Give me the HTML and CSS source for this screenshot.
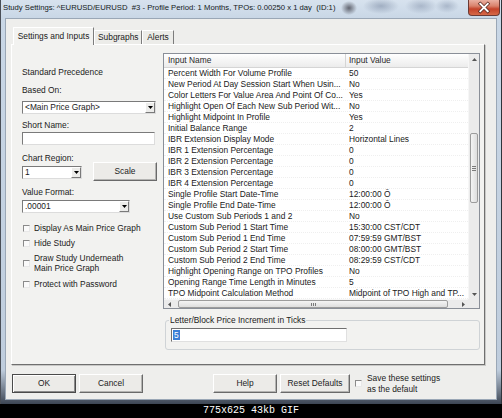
FILE: index.html
```html
<!DOCTYPE html>
<html>
<head>
<meta charset="utf-8">
<title>Study Settings</title>
<link rel="stylesheet" href="styles.css">
</head>
<body>
<div class="window">
  <div class="titlebar">
    <span class="title">Study Settings: ^EURUSD/EURUSD&nbsp; #3 - Profile Period: 1 Months, TPOs: 0.00250 x 1 day&nbsp; (ID:1)</span>
    <div class="close">
      <svg width="32" height="16" viewBox="0 0 32 16">
        <path d="M12 3.5 L20 11.5 M20 3.5 L12 11.5" stroke="#5a2a22" stroke-width="3.6" stroke-linecap="square"/>
        <path d="M12 3.5 L20 11.5 M20 3.5 L12 11.5" stroke="#ffffff" stroke-width="2" stroke-linecap="square"/>
      </svg>
    </div>
  </div>
  <div class="client">
    <div class="tabs">
      <div class="tab active">Settings and Inputs</div>
      <div class="tab">Subgraphs</div>
      <div class="tab">Alerts</div>
    </div>
    <div class="panel">
      <div class="leftcol">
        <div class="lbl first">Standard Precedence</div>
        <div class="lbl gap8">Based On:</div>
        <div class="select wide gap6"><span class="stext">&lt;Main Price Graph&gt;</span><span class="sbtn"><svg width="5" height="3" viewBox="0 0 5 3"><path d="M0 0H5L2.5 3Z" fill="#000"/></svg></span></div>
        <div class="lbl gap6">Short Name:</div>
        <div class="textbox"></div>
        <div class="lbl gap8">Chart Region:</div>
        <div class="regionrow">
          <div class="select small"><span class="stext">1</span><span class="sbtn"><svg width="5" height="3" viewBox="0 0 5 3"><path d="M0 0H5L2.5 3Z" fill="#000"/></svg></span></div>
          <div class="btn scale">Scale</div>
        </div>
        <div class="lbl gap6">Value Format:</div>
        <div class="select fmt"><span class="stext">.00001</span><span class="sbtn"><svg width="5" height="3" viewBox="0 0 5 3"><path d="M0 0H5L2.5 3Z" fill="#000"/></svg></span></div>
        <div class="check c1"><span class="box"></span><span>Display As Main Price Graph</span></div>
        <div class="check c2"><span class="box"></span><span>Hide Study</span></div>
        <div class="check c3"><span class="box"></span><span>Draw Study Underneath<br>Main Price Graph</span></div>
        <div class="check c4"><span class="box"></span><span>Protect with Password</span></div>
      </div>
      <div class="rightcol">
        <div class="list">
          <div class="list-main">
            <div class="list-head"><div class="cn">Input Name</div><div class="cv">Input Value</div></div>
            <div class="row"><div class="cn">Percent Width For Volume Profile</div><div class="cv">50</div></div>
            <div class="row"><div class="cn">New Period At Day Session Start When Usin...</div><div class="cv">No</div></div>
            <div class="row"><div class="cn">Color Letters For Value Area And Point Of Co...</div><div class="cv">Yes</div></div>
            <div class="row"><div class="cn">Highlight Open Of Each New Sub Period Wit...</div><div class="cv">No</div></div>
            <div class="row"><div class="cn">Highlight Midpoint In Profile</div><div class="cv">Yes</div></div>
            <div class="row"><div class="cn">Initial Balance Range</div><div class="cv">2</div></div>
            <div class="row"><div class="cn">IBR Extension Display Mode</div><div class="cv">Horizontal Lines</div></div>
            <div class="row"><div class="cn">IBR 1 Extension Percentage</div><div class="cv">0</div></div>
            <div class="row"><div class="cn">IBR 2 Extension Percentage</div><div class="cv">0</div></div>
            <div class="row"><div class="cn">IBR 3 Extension Percentage</div><div class="cv">0</div></div>
            <div class="row"><div class="cn">IBR 4 Extension Percentage</div><div class="cv">0</div></div>
            <div class="row"><div class="cn">Single Profile Start Date-Time</div><div class="cv">12:00:00 Ō</div></div>
            <div class="row"><div class="cn">Single Profile End Date-Time</div><div class="cv">12:00:00 Ō</div></div>
            <div class="row"><div class="cn">Use Custom Sub Periods 1 and 2</div><div class="cv">No</div></div>
            <div class="row"><div class="cn">Custom Sub Period 1 Start Time</div><div class="cv">15:30:00 CST/CDT</div></div>
            <div class="row"><div class="cn">Custom Sub Period 1 End Time</div><div class="cv">07:59:59 GMT/BST</div></div>
            <div class="row"><div class="cn">Custom Sub Period 2 Start Time</div><div class="cv">08:00:00 GMT/BST</div></div>
            <div class="row"><div class="cn">Custom Sub Period 2 End Time</div><div class="cv">08:29:59 CST/CDT</div></div>
            <div class="row"><div class="cn">Highlight Opening Range on TPO Profiles</div><div class="cv">No</div></div>
            <div class="row"><div class="cn">Opening Range Time Length in Minutes</div><div class="cv">5</div></div>
            <div class="row"><div class="cn">TPO Midpoint Calculation Method</div><div class="cv">Midpoint of TPO High and TP...</div></div>
          </div>
          <div class="vscroll">
            <div class="arrow"><svg width="5" height="3" viewBox="0 0 5 3"><path d="M0 3H5L2.5 0Z" fill="#555"/></svg></div>
            <div class="vthumb-space"></div>
            <div class="vthumb"><span class="grip-h"></span><span class="grip-h"></span><span class="grip-h"></span></div>
            <div class="fill"></div>
            <div class="arrow"><svg width="5" height="3" viewBox="0 0 5 3"><path d="M0 0H5L2.5 3Z" fill="#555"/></svg></div>
          </div>
          <div class="hscroll">
            <div class="arrow"><svg width="3" height="5" viewBox="0 0 3 5"><path d="M3 0V5L0 2.5Z" fill="#555"/></svg></div>
            <div class="hthumb"><span class="grip-v"></span><span class="grip-v"></span><span class="grip-v"></span></div>
            <div class="fill"></div>
            <div class="arrow"><svg width="3" height="5" viewBox="0 0 3 5"><path d="M0 0V5L3 2.5Z" fill="#555"/></svg></div>
          </div>
          <div class="corner"></div>
        </div>
        <fieldset class="group">
          <legend>Letter/Block Price Increment in Ticks</legend>
          <div class="tickbox"><span class="sel">5</span></div>
        </fieldset>
      </div>
    </div>
    <div class="buttons">
      <div class="btn default">OK</div>
      <div class="btn cancel">Cancel</div>
      <div class="btn help">Help</div>
      <div class="btn reset">Reset Defaults</div>
      <div class="savecheck"><span class="box"></span><span>Save these settings<br>as the default</span></div>
    </div>
  </div>
</div>
<div class="caption">775x625 43kb GIF</div>
</body>
</html>
```

FILE: styles.css
```css
* { box-sizing: border-box; }
html, body { margin: 0; padding: 0; }
body {
  width: 502px;
  height: 418px;
  overflow: hidden;
  background: #000;
  font-family: "Liberation Sans", Arial, sans-serif;
  font-size: 8.4px;
  color: #1a1a1a;
}

/* window frame */
.window {
  width: 502px;
  height: 404px;
  display: flex;
  flex-direction: column;
  border-left: 1px solid #4a4f57;
  border-right: 1px solid #2f343b;
  background:
    radial-gradient(ellipse 8px 7px at 348px 8px, rgba(60,60,70,0.75), rgba(60,60,70,0) 100%),
    radial-gradient(ellipse 18px 8px at 380px 6px, rgba(120,135,160,0.55), rgba(120,135,160,0) 100%),
    radial-gradient(ellipse 16px 8px at 420px 6px, rgba(120,135,160,0.45), rgba(120,135,160,0) 100%),
    radial-gradient(ellipse 12px 7px at 446px 6px, rgba(120,135,160,0.45), rgba(120,135,160,0) 100%),
    linear-gradient(180deg, #d7e2ee 0px, #c9d7e6 18px, #bfcddd 370px, #3d4654 404px);
}
.titlebar {
  height: 18px;
  display: flex;
  align-items: flex-start;
}
.title {
  padding-left: 2px;
  line-height: 16px;
  font-size: 7.7px;
  color: #141a22;
  white-space: nowrap;
}
.close {
  margin-left: auto;
  margin-right: 1px;
  width: 32px;
  height: 16px;
  border: 1px solid #6b3a34;
  border-top: none;
  border-radius: 0 0 4px 4px;
  background: linear-gradient(180deg, #eab0a2 0%, #d9826c 40%, #c4432a 60%, #d66a48 100%);
  display: flex;
}

/* client */
.client {
  flex: 1;
  margin: 0 4px 4px 4px;
  background: #eeeeec;
  border: 1px solid #9aa7b6;
  display: flex;
  flex-direction: column;
}
.tabs {
  display: flex;
  align-items: flex-end;
  height: 17px;
  margin-top: 8px;
  padding-left: 7px;
}
.tab {
  height: 14px;
  line-height: 13px;
  padding: 0 3px;
  background: #ecece9;
  border-top: 1px solid #fff;
  border-left: 1px solid #fff;
  border-right: 1px solid #7c7c7c;
  color: #1a1a1a;
  white-space: nowrap;
  text-align: center;
}
.tab.active {
  width: 81px;
  height: 18px;
  line-height: 16px;
  margin-bottom: -1px;
  position: relative;
  z-index: 1;
  background: #f2f2f0;
  border-top-left-radius: 1px;
}
.tab:nth-child(2) { width: 48px; }
.tab:nth-child(3) { width: 32px; }

.panel {
  margin-left: 5px;
  width: 474px;
  height: 321px;
  background: #f2f2f0;
  border: 1px solid;
  border-color: #ffffff #6f6f6f #6f6f6f #ffffff;
  box-shadow: 1px 1px 0 #c8c8c6;
  display: flex;
  padding: 8px 0 0 10px;
}

/* left column */
.leftcol {
  width: 141px;
  display: flex;
  flex-direction: column;
}
.lbl {
  height: 10px;
  line-height: 10px;
  white-space: nowrap;
}
.lbl.first { margin-top: 14px; }
.gap8 { margin-top: 8px; }
.gap6 { margin-top: 6px; }

.select {
  height: 13px;
  display: flex;
  align-items: stretch;
  background: #fff;
  border: 1px solid;
  border-color: #7a7a7a #dcdcdc #dcdcdc #7a7a7a;
}
.select.wide { width: 134px; }
.select.small { width: 60px; margin-top: 4px; }
.select.fmt { width: 108px; margin-top: 3px; }
.stext {
  flex: 1;
  padding-left: 2px;
  line-height: 11px;
  white-space: nowrap;
}
.sbtn {
  width: 10px;
  background: #ececea;
  border: 1px solid;
  border-color: #fff #7a7a7a #7a7a7a #fff;
  display: flex;
  align-items: center;
  justify-content: center;
}
.textbox {
  margin-top: 2px;
  width: 133px;
  height: 13px;
  background: #fff;
  border: 1px solid;
  border-color: #7a7a7a #dcdcdc #dcdcdc #7a7a7a;
}
.regionrow {
  margin-top: -1px;
  display: flex;
  align-items: flex-start;
  gap: 11px;
}

.btn {
  height: 19px;
  line-height: 17px;
  text-align: center;
  background: #ecebe8;
  border: 1px solid;
  border-color: #ffffff #6a6a6a #6a6a6a #ffffff;
  box-shadow: inset -1px -1px 0 #b4b4b2;
  color: #222;
  white-space: nowrap;
}
.btn.scale { width: 64px; }

.check {
  display: flex;
  align-items: center;
  gap: 4px;
  padding-left: 1px;
  line-height: 10px;
  white-space: nowrap;
}
.check.c1 { margin-top: 10px; }
.check.c2 { margin-top: 5px; }
.check.c3 { margin-top: 5px; }
.check.c4 { margin-top: 6px; }
.box {
  width: 7px;
  height: 7px;
  flex: none;
  background: #fafafa;
  border: 1px solid;
  border-color: #8a8a8a #e8e8e8 #e8e8e8 #8a8a8a;
}

/* right column */
.rightcol {
  display: flex;
  flex-direction: column;
}
.list {
  width: 317px;
  height: 256px;
  background: #fff;
  border: 1px solid #8a8f98;
  display: grid;
  grid-template-columns: 304px 11px;
  grid-template-rows: 245px 9px;
}
.list-main {
  overflow: hidden;
}
.list-head {
  height: 14px;
  display: flex;
  background: linear-gradient(180deg, #ffffff 0%, #f5f5f5 50%, #ececec 100%);
  border-bottom: 1px solid #d5d5d5;
  color: #2a2a2a;
}
.list-head .cn { border-right: 1px solid #d5d5d5; line-height: 13px; }
.list-head .cv { line-height: 13px; }
.row {
  height: 11px;
  display: flex;
  line-height: 11px;
  border-bottom: 1px dotted #efefef;
}
.cn {
  width: 182px;
  padding-left: 4px;
  white-space: nowrap;
  overflow: hidden;
}
.cv {
  flex: 1;
  padding-left: 3px;
  white-space: nowrap;
  overflow: hidden;
}

.vscroll {
  display: flex;
  flex-direction: column;
  background: #ebebeb;
  border-left: 1px solid #f6f6f6;
}
.vscroll .arrow {
  height: 10px;
  display: flex;
  align-items: center;
  justify-content: center;
}
.vthumb-space { height: 69px; }
.vthumb {
  height: 70px;
  margin: 0 1px;
  border: 1px solid #9c9c9c;
  border-radius: 2px;
  background: linear-gradient(90deg, #f4f4f4, #dedede);
  display: flex;
  flex-direction: column;
  align-items: center;
  justify-content: center;
  gap: 1px;
}
.grip-h { width: 4px; height: 1px; background: #7a7a7a; }
.fill { flex: 1; }
.hscroll {
  display: flex;
  background: #ebebeb;
  border-top: 1px solid #f6f6f6;
}
.hscroll .arrow {
  width: 10px;
  display: flex;
  align-items: center;
  justify-content: center;
}
.hthumb {
  margin-left: 4px;
  width: 270px;
  border: 1px solid #9c9c9c;
  border-radius: 2px;
  background: linear-gradient(180deg, #f4f4f4, #dedede);
  display: flex;
  align-items: center;
  justify-content: center;
  gap: 1px;
}
.grip-v { width: 1px; height: 3px; background: #7a7a7a; }
.corner { background: #ebebeb; }

.group {
  margin: 6px 0 0 2px;
  width: 315px;
  border: 1px solid #cfd3d6;
  border-radius: 3px;
  padding: 0 5px 7px 5px;
  min-width: 0;
}
.group legend {
  padding: 0 1px;
  margin-left: -2px;
  line-height: 10px;
  height: 10px;
  color: #222;
}
.tickbox {
  margin-top: 3px;
  width: 176px;
  height: 14px;
  background: #fff;
  border: 1px solid;
  border-color: #6f6f6f #e0e0e0 #e0e0e0 #6f6f6f;
  padding: 1px 0 0 1px;
  line-height: 10px;
}
.sel {
  display: inline-block;
  background: #3b7fd6;
  color: #fff;
  padding: 0 1px;
  line-height: 10px;
}

/* bottom buttons */
.buttons {
  display: flex;
  align-items: center;
  margin-top: 8px;
  padding-left: 6px;
}
.buttons .btn { width: 64px; }
.btn.default {
  border-color: #4a4a4a;
  box-shadow: inset 1px 1px 0 #fff, inset -1px -1px 0 #8a8a8a;
  color: #222;
}
.btn.cancel { margin-left: 3px; }
.btn.help { margin-left: 70px; }
.btn.reset { margin-left: 3px; width: 70px; }
.savecheck {
  margin-left: 5px;
  display: flex;
  align-items: center;
  gap: 5px;
  line-height: 10.5px;
  white-space: nowrap;
}

.caption {
  height: 14px;
  line-height: 14px;
  text-align: center;
  color: #fff;
  font-family: "Liberation Mono", "DejaVu Sans Mono", monospace;
  font-size: 10px;
}
```
